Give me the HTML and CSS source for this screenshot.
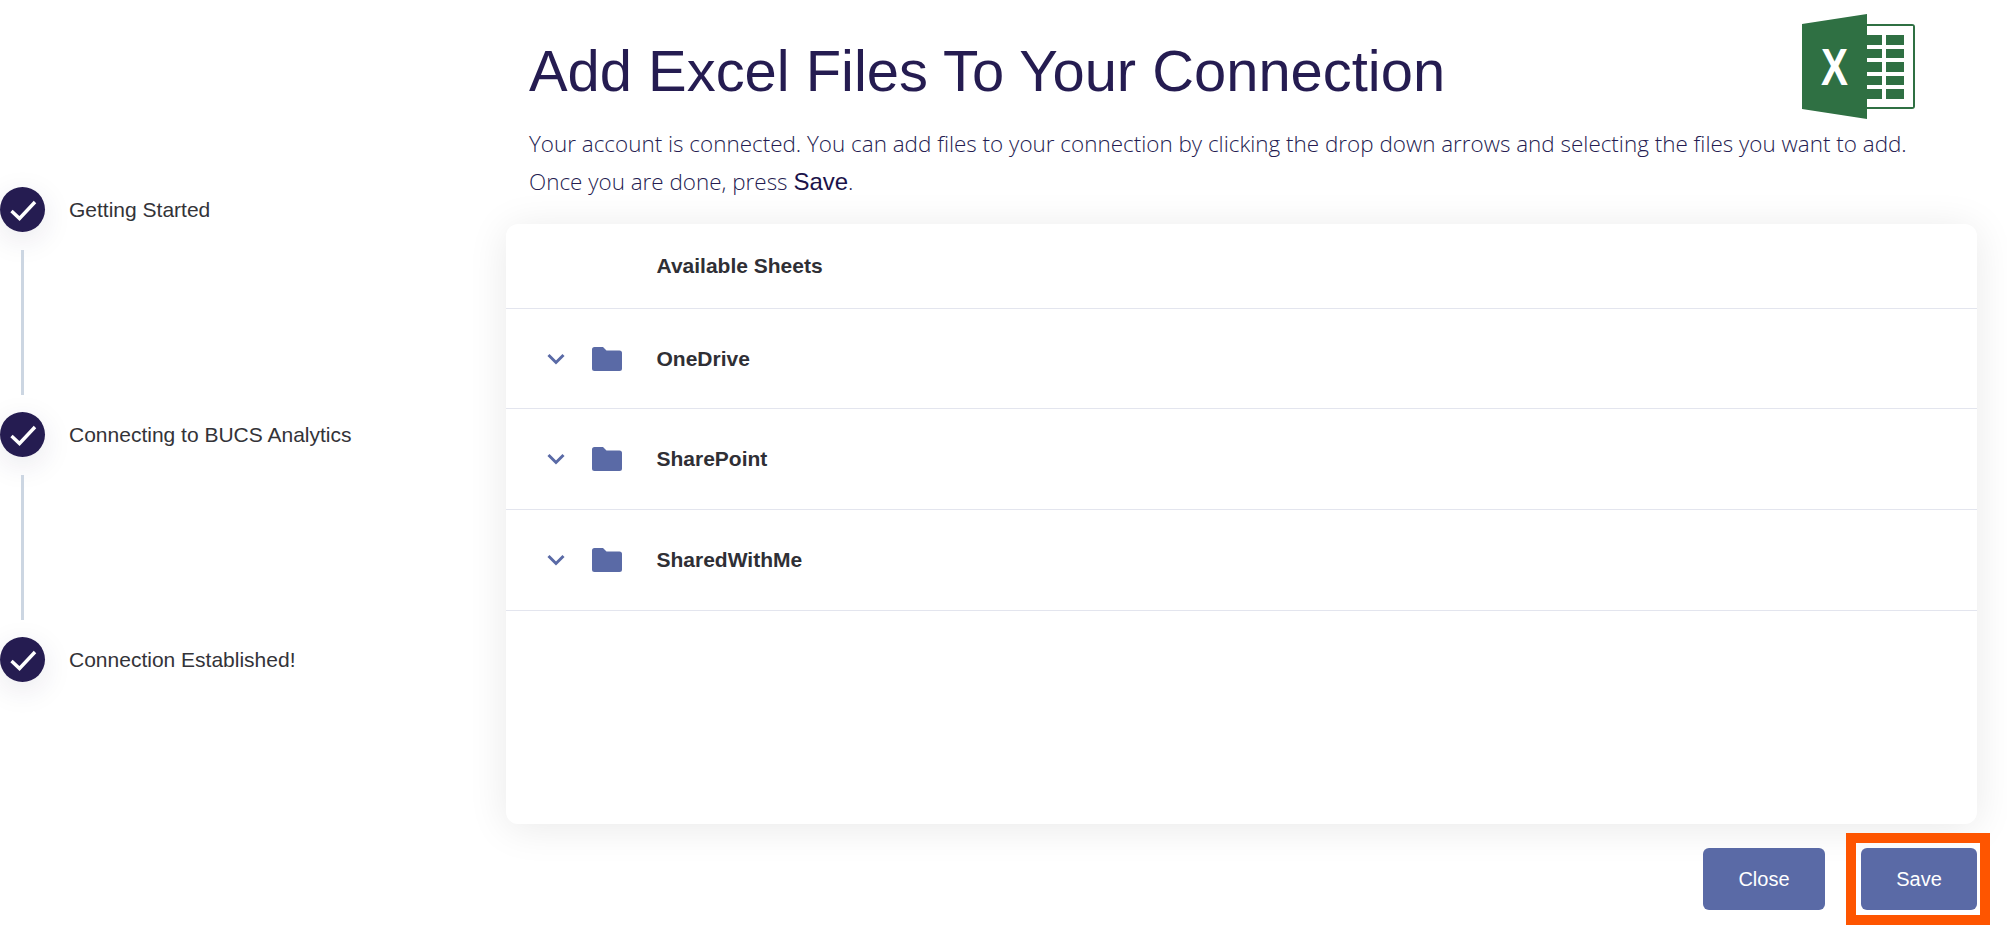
FILE: index.html
```html
<!DOCTYPE html>
<html lang="en">
<head>
<meta charset="utf-8">
<title>Add Excel Files To Your Connection</title>
<link rel="stylesheet" href="styles.css">
</head>
<body>
<div class="page">
  <aside class="steps">
    <div class="step">
      <span class="dot"><svg viewBox="0 0 45 45" class="check"><path d="M11.500 24l8 7.500L35 15"/></svg></span>
      <span class="step-label">Getting Started</span>
    </div>
    <div class="connector"></div>
    <div class="step">
      <span class="dot"><svg viewBox="0 0 45 45" class="check"><path d="M11.500 24l8 7.500L35 15"/></svg></span>
      <span class="step-label">Connecting to BUCS Analytics</span>
    </div>
    <div class="connector"></div>
    <div class="step">
      <span class="dot"><svg viewBox="0 0 45 45" class="check"><path d="M11.500 24l8 7.500L35 15"/></svg></span>
      <span class="step-label">Connection Established!</span>
    </div>
  </aside>
  <main class="main">
    <header class="head">
      <h1 class="title">Add Excel Files To Your Connection</h1>
      <svg class="excel" viewBox="0 0 120 110" aria-label="Excel logo">
        <path class="sheet" d="M66 11H112a3 3 0 0 1 3 3V93a3 3 0 0 1-3 3H66z"/>
        <path class="paper" d="M66 13H113V94H66z"/>
        <path class="cells" d="M67 22h15v10H67zM86 22h18v10H86zM67 36h15v9H67zM86 36h18v9H86zM67 49h15v10H67zM86 49h18v10H86zM67 63h15v9H67zM86 63h18v9H86zM67 76h15v10H67zM86 76h18v10H86z"/>
        <path class="book" d="M2 11L67 1V106L2 96z"/>
        <text class="excel-x" x="21" y="72" textLength="27" lengthAdjust="spacingAndGlyphs">X</text>
      </svg>
    </header>
    <p class="intro">Your account is connected. You can add files to your connection by clicking the drop down arrows and selecting the files you want to add. Once you are done, press <strong>Save</strong>.</p>
    <section class="card">
      <div class="row row-head"><span class="name">Available Sheets</span></div>
      <div class="row">
        <svg class="chev" viewBox="0 0 18 12"><path d="M1.500 2L9 9.500 16.500 2"/></svg>
        <svg class="folder" viewBox="0 0 30 24"><path d="M2.500 0H11l3.500 3.500H27.500A2.500 2.500 0 0 1 30 6V21.500A2.500 2.500 0 0 1 27.500 24H2.500A2.500 2.500 0 0 1 0 21.500V2.500A2.500 2.500 0 0 1 2.500 0z"/></svg>
        <span class="name">OneDrive</span>
      </div>
      <div class="row">
        <svg class="chev" viewBox="0 0 18 12"><path d="M1.500 2L9 9.500 16.500 2"/></svg>
        <svg class="folder" viewBox="0 0 30 24"><path d="M2.500 0H11l3.500 3.500H27.500A2.500 2.500 0 0 1 30 6V21.500A2.500 2.500 0 0 1 27.500 24H2.500A2.500 2.500 0 0 1 0 21.500V2.500A2.500 2.500 0 0 1 2.500 0z"/></svg>
        <span class="name">SharePoint</span>
      </div>
      <div class="row">
        <svg class="chev" viewBox="0 0 18 12"><path d="M1.500 2L9 9.500 16.500 2"/></svg>
        <svg class="folder" viewBox="0 0 30 24"><path d="M2.500 0H11l3.500 3.500H27.500A2.500 2.500 0 0 1 30 6V21.500A2.500 2.500 0 0 1 27.500 24H2.500A2.500 2.500 0 0 1 0 21.500V2.500A2.500 2.500 0 0 1 2.500 0z"/></svg>
        <span class="name">SharedWithMe</span>
      </div>
    </section>
    <footer class="actions">
      <button class="btn btn-close" type="button">Close</button>
      <button class="btn btn-save" type="button">Save<span class="highlight"></span></button>
    </footer>
  </main>
</div>
</body>
</html>
```
FILE: styles.css
```css
* { box-sizing: border-box; }
html, body { margin: 0; height: 100%; background: #fff; overflow: hidden; }
body { font-family: "Liberation Sans", Arial, sans-serif; color: #2f2f35; }

.page { display: flex; height: 943px; }

.steps { width: 506px; flex: none; padding-top: 187px; display: flex; flex-direction: column; align-items: flex-start; }
.step { display: flex; align-items: center; gap: 24px; height: 45px; }
.dot { width: 45px; height: 45px; border-radius: 50%; background: #251c51; box-shadow: 0 8px 30px rgba(37, 28, 81, .1); flex: none; display: block; }
.check { display: block; width: 45px; height: 45px; }
.check path { fill: none; stroke: #fff; stroke-width: 3.4; }
.step-label { font-size: 21px; line-height: 24px; color: #333338; }
.connector { width: 3px; height: 145px; margin: 18px 0 17px 21px; background: #ccd6e2; }

.main { flex: 1; min-width: 0; padding-right: 30px; }
.head { display: flex; justify-content: space-between; align-items: flex-start; padding: 0 0 0 23px; height: 125px; }
.title { margin: 35px 0 0; font-size: 57.900px; line-height: 72px; font-weight: 400; color: #251c51; white-space: nowrap; }
.excel { width: 120px; height: 110px; margin: 13px 57px 0 0; flex: none; }
.sheet { fill: #2f7043; }
.paper { fill: #fff; }
.cells { fill: #2f7043; }
.book { fill: #2f7043; }
.excel-x { font-family: "Liberation Sans", Arial, sans-serif; font-weight: 700; font-size: 52px; fill: #fff; }

.intro { margin: 0 0 7px; height: 92px; padding: 0 44px 0 23px; font-family: "Open Sans", sans-serif; font-weight: 300; font-size: 22.440px; line-height: 38px; color: #251c51; }
.intro strong { font-family: "Liberation Sans", Arial, sans-serif; font-weight: 400; font-size: 24px; line-height: 1; color: #1b134a; }

.card { height: 600px; border-radius: 12px; background: #fff; box-shadow: 0 4px 40px rgba(0, 0, 0, .09); }
.row { height: 101px; display: flex; align-items: center; padding-left: 41px; border-bottom: 1px solid #e3e5ee; }
.row-head { height: 85px; padding-left: 150.500px; }
.row-head + .row { height: 100px; }
.chev { width: 18px; height: 12px; flex: none; margin-right: 27px; }
.chev path { fill: none; stroke: #5a6aa6; stroke-width: 3; }
.folder { width: 30px; height: 24px; flex: none; margin-right: 34.500px; }
.folder path { fill: #5a6aa6; }
.name { font-size: 21px; font-weight: 700; color: #2f2f35; }

.actions { display: flex; justify-content: flex-end; gap: 36px; margin-top: 24px; }
.btn { position: relative; height: 62px; border: 0; border-radius: 6px; background: #5a6aa6; color: #fff; font-family: "Liberation Sans", Arial, sans-serif; font-size: 20px; padding: 0; }
.btn-close { width: 122px; }
.btn-save { width: 116px; }
.highlight { position: absolute; left: -15px; top: -15px; width: 144px; height: 92px; border: 10px solid #fe5500; pointer-events: none; }
```
